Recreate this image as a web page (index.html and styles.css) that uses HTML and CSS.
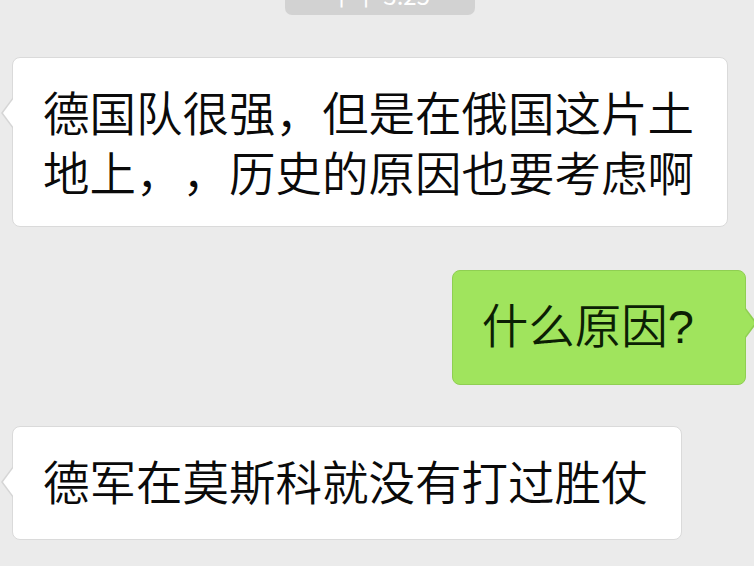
FILE: index.html
```html
<!DOCTYPE html>
<html lang="zh-CN">
<head>
<meta charset="utf-8">
<title>聊天</title>
<link rel="stylesheet" href="styles.css">
</head>
<body>
<div class="chat">
  <div class="time-row"><span class="time">下午 3:25</span></div>
  <div class="msg msg-left">
    <div class="bubble bubble-white bubble-wide">德国队很强，但是在俄国这片土地上，，历史的原因也要考虑啊</div>
  </div>
  <div class="msg msg-right">
    <div class="bubble bubble-green">什么原因<span class="qmark">?</span></div>
  </div>
  <div class="msg msg-left msg-last">
    <div class="bubble bubble-white">德军在莫斯科就没有打过胜仗</div>
  </div>
</div>
</body>
</html>
```

FILE: styles.css
```css
html, body {
  margin: 0;
  padding: 0;
  background: #ebebeb;
}

body {
  width: 754px;
  height: 566px;
  overflow: hidden;
  font-family: "Noto Sans CJK SC", "Noto Sans", sans-serif;
  color: #0a0a0a;
}

.chat {
  display: flex;
  flex-direction: column;
}

.time-row {
  display: flex;
  justify-content: center;
  padding-left: 6px;
  height: 15px;
  overflow: visible;
}

.time {
  display: block;
  margin-top: -25px;
  width: 190px;
  height: 40px;
  box-sizing: border-box;
  border-radius: 7px;
  background: #d2d2d2;
  color: #ffffff;
  font-size: 24px;
  line-height: 40px;
  text-align: center;
}

.msg {
  display: flex;
}

.msg-left {
  justify-content: flex-start;
  padding-left: 12px;
  margin-top: 42px;
}

.msg-right {
  justify-content: flex-end;
  padding-right: 8px;
  margin-top: 43px;
}

.msg-last {
  margin-top: 41px;
}

.bubble {
  position: relative;
  box-sizing: border-box;
  border-radius: 8px;
  font-size: 46.5px;
  font-weight: 350;
  line-height: 60px;
  letter-spacing: 0;
  text-spacing-trim: space-all;
}

.bubble-white {
  background: #ffffff;
  border: 1px solid #dadada;
  padding: 23px 33px 29px 30px;
}

.bubble-wide {
  max-width: 716px;
  padding-bottom: 25px;
}

.bubble-green {
  background: #a0e45d;
  border: 1px solid #8fcf52;
  color: #0c1f04;
  height: 115px;
  padding: 22px 51px 31px 29px;
}

.qmark {
  font-family: "Liberation Sans", "Noto Sans", sans-serif;
  font-weight: 400;
  font-size: 47px;
  line-height: 0;
}

.bubble::before,
.bubble::after {
  content: "";
  position: absolute;
  width: 0;
  height: 0;
  border-style: solid;
}

.bubble-white::before {
  left: -12px;
  top: 39px;
  border-width: 16px 12px 16px 0;
  border-color: transparent #d6d6d6 transparent transparent;
}

.bubble-white::after {
  left: -10px;
  top: 40px;
  border-width: 15px 11px 15px 0;
  border-color: transparent #ffffff transparent transparent;
}

.bubble-green::before {
  right: -12px;
  top: 36px;
  border-width: 16px 0 16px 12px;
  border-color: transparent transparent transparent #8fcf52;
}

.bubble-green::after {
  right: -10px;
  top: 37px;
  border-width: 15px 0 15px 11px;
  border-color: transparent transparent transparent #a0e45d;
}
```
